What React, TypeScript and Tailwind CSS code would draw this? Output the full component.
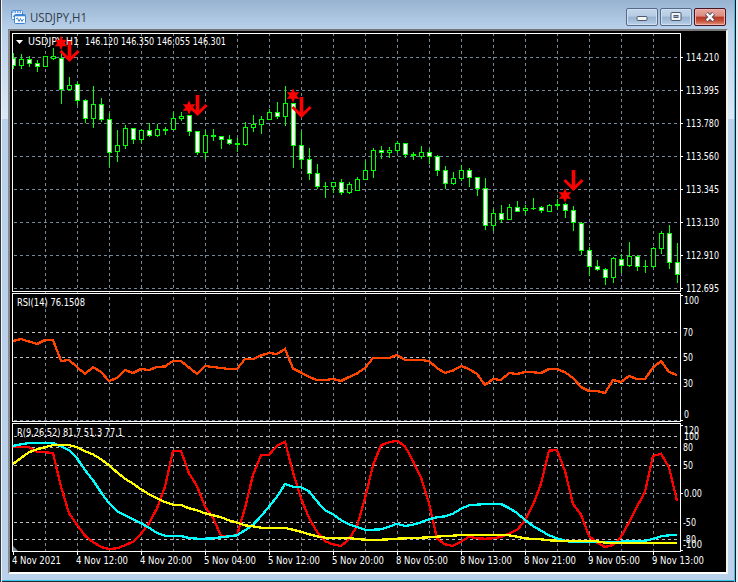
import React from "react";

// [high, bodyTop, bodyBottom, low, kind]; kind: 1 = bear (white), 0 = bull (hollow)
type Candle = [number, number, number, number, number];

const candles: Candle[] = [
  [53, 58, 65, 68, 1], [54, 59, 65, 68, 0], [56, 59, 63, 66, 1], [60, 63, 66, 71, 1],
  [56, 56, 66, 66, 0], [48, 56, 58, 59, 0], [50, 58, 89, 103, 1], [77, 85, 89, 90, 0],
  [82, 84, 100, 104, 1], [99, 100, 118, 122, 1], [86, 104, 118, 127, 0], [98, 104, 119, 121, 1],
  [113, 119, 152, 166, 1], [130, 145, 151, 161, 0], [125, 128, 145, 148, 0], [128, 128, 139, 143, 1],
  [129, 130, 139, 142, 0], [123, 130, 135, 136, 1], [124, 129, 135, 136, 0], [127, 129, 130, 134, 0],
  [112, 118, 129, 129, 0], [112, 116, 118, 120, 0], [115, 115, 131, 135, 1], [131, 131, 152, 154, 1],
  [130, 135, 152, 158, 0], [129, 135, 136, 140, 0], [136, 136, 139, 148, 1], [135, 139, 143, 144, 1],
  [138, 143, 144, 151, 0], [122, 127, 144, 145, 0], [115, 124, 127, 131, 0], [116, 119, 124, 133, 0],
  [109, 112, 119, 119, 0], [102, 112, 116, 118, 1], [86, 103, 116, 125, 0], [103, 103, 145, 167, 1],
  [131, 145, 159, 168, 1], [148, 159, 173, 179, 1], [164, 173, 186, 188, 1], [182, 186, 186, 197, 0],
  [182, 182, 186, 192, 0], [179, 182, 192, 194, 1], [182, 184, 192, 193, 0], [177, 179, 190, 190, 0],
  [161, 170, 179, 179, 0], [148, 150, 170, 177, 0], [146, 150, 152, 158, 1], [147, 150, 152, 157, 0],
  [141, 143, 150, 152, 0], [143, 143, 154, 157, 1], [152, 154, 155, 159, 0], [146, 152, 156, 158, 0],
  [149, 152, 156, 163, 1], [155, 156, 170, 175, 1], [166, 170, 183, 188, 1], [172, 178, 183, 184, 0],
  [165, 170, 178, 180, 0], [168, 170, 177, 186, 1], [177, 177, 188, 195, 1], [178, 188, 225, 229, 1],
  [209, 213, 225, 230, 0], [205, 213, 219, 222, 1], [204, 207, 219, 219, 0], [201, 207, 211, 211, 1],
  [205, 208, 210, 214, 0], [198, 208, 208, 209, 0], [206, 207, 210, 212, 1], [204, 205, 211, 211, 0],
  [199, 204, 205, 209, 0], [203, 204, 210, 217, 1], [206, 210, 222, 230, 1], [222, 223, 250, 254, 1],
  [247, 250, 266, 275, 1], [260, 266, 269, 270, 1], [268, 269, 277, 284, 1], [257, 258, 277, 282, 0],
  [254, 259, 265, 272, 1], [242, 256, 265, 266, 0], [255, 256, 266, 270, 1], [260, 266, 266, 272, 0],
  [247, 248, 266, 267, 0], [231, 233, 248, 253, 0], [225, 233, 262, 268, 1], [243, 262, 274, 282, 1],
];

const rsi = [
  341, 339, 341.5, 344, 340, 340, 361, 360, 367, 374, 367, 372, 381, 378, 370, 373, 369, 370, 367, 366.5,
  361, 361, 367.5, 374, 366, 367, 368, 369, 369, 359, 359, 355.5, 353, 354, 349, 368.5, 372.5, 377, 380, 380,
  379, 381, 377, 373.5, 368, 358, 358, 358, 355, 360, 360, 360, 361, 368, 373, 370.5, 366, 369, 374, 385,
  379, 380, 373, 374, 372, 372.3, 373, 369, 369, 372.3, 378, 387, 391, 391, 393, 380, 382, 376, 379, 379,
  367.5, 361, 372, 375,
];

const fast = [
  447, 447, 447, 452, 452.3, 453, 486.7, 513.3, 524.7, 535.7, 542, 547, 549, 548.3, 545.3, 541.7, 533.7, 523.3,
  508.3, 486.7, 451, 451, 473.3, 486, 506.7, 517.7, 536, 536.3, 535, 508, 475, 455, 454.7, 446, 441.7, 472.3,
  498.3, 518, 531.7, 541.3, 544.3, 546, 539.3, 526, 498.3, 465.3, 445.3, 442.3, 440.7, 446.3, 461, 477.3, 503.3,
  538.7, 544.3, 546, 541.7, 536.7, 538.3, 538.7, 538.3, 537, 533.7, 530, 520.3, 505, 483.7, 450.7, 450, 471, 504,
  514.7, 536, 542.7, 547, 545, 536.7, 522.3, 506.7, 491.7, 456, 453.7, 467.3, 501,
];

const mid = [
  446, 444.3, 443, 443, 443, 443, 446.3, 450.3, 458.3, 470, 480.3, 492.3, 503.3, 511, 515.3, 519.3, 523.3, 527.7,
  533, 535.7, 536, 536, 538, 538.7, 538.7, 538.3, 537.3, 536.3, 535.3, 530.3, 524.7, 516.3, 506.7, 496.7, 484,
  486.7, 487.3, 491.3, 501.3, 510.3, 514.3, 520, 524.3, 527, 529.7, 529.7, 529.3, 526.7, 523.7, 526, 524.7, 522.3,
  519.3, 517.3, 516.3, 513.7, 508.7, 505.3, 504.7, 504, 504, 504, 508, 513, 520, 526, 530.7, 535.3, 538.3, 540.7,
  542.3, 542.3, 542.3, 542.3, 542.3, 542.3, 541.7, 541, 541, 540.7, 539, 536.3, 535.3, 534.7,
];

const slow = [
  464, 458, 452.3, 449.3, 447.3, 445, 445, 445, 447.3, 451.3, 454.3, 459.3, 465.3, 472.3, 478.7, 483.7, 489.3,
  494.3, 498.3, 502, 504.7, 505, 508.3, 510.3, 513.3, 515.3, 517.3, 520.3, 522.7, 525.3, 526.3, 527.7, 528, 528,
  528, 529.7, 531.7, 534.3, 536.3, 537.7, 538, 538, 538, 539, 539.7, 539.7, 539.7, 539.3, 538.7, 538.3, 537.7,
  537.7, 537.3, 536.7, 536, 535.7, 535, 535, 535, 535, 535, 535, 535.3, 536.7, 538.3, 539, 539.3, 540.3, 540.7,
  540.7, 541, 541, 541, 541.3, 542.7, 543, 543, 543, 543, 543, 543, 543, 543, 543,
];

const signals = [
  { star: [61, 43], arrow: [69.5, 41] },
  { star: [189, 107.5], arrow: [197.5, 95] },
  { star: [293, 95.5], arrow: [301.5, 97] },
  { star: [565, 195.5], arrow: [573.5, 170] },
];

const times = [
  "4 Nov 2021", "4 Nov 12:00", "4 Nov 20:00", "5 Nov 04:00", "5 Nov 12:00", "5 Nov 20:00",
  "8 Nov 05:00", "8 Nov 13:00", "8 Nov 21:00", "9 Nov 05:00", "9 Nov 13:00",
];

const SLATE = "#778899";
const SILVER = "#c0c0c0";
const FONT = "font-['DejaVu_Sans_Condensed','DejaVu_Sans',sans-serif] text-[10.5px]";

const gridX = Array.from({ length: 20 }, (_, i) => 45 + i * 32);
const toPoints = (ys: number[]) => ys.map((y, i) => `${13 + i * 8},${y}`).join(" ");

function Label({ x, y, w, children }: { x: number; y: number; w: number; children: string }) {
  return (
    <text x={x} y={y} textLength={w} lengthAdjust="spacingAndGlyphs" fill="#fff" xmlSpace="preserve">
      {children}
    </text>
  );
}

function Series({ ys, color }: { ys: number[]; color: string }) {
  return <polyline points={toPoints(ys)} fill="none" stroke={color} strokeWidth={2.3} shapeRendering="crispEdges" />;
}

interface PanelProps {
  top: number;
  height: number;
  frameTop: number;
  frameBottom: number;
  lines: [number, string][];
  ticks: number[];
  children: React.ReactNode;
}

function Panel({ top, height, frameTop, frameBottom, lines, ticks, children }: PanelProps) {
  return (
    <svg
      className={`block shrink-0 overflow-visible ${FONT}`}
      width={716}
      height={height}
      viewBox={`10 ${top} 716 ${height}`}
    >
      <g shapeRendering="crispEdges">
        {gridX.map((x) => (
          <line key={x} x1={x + 0.5} x2={x + 0.5} y1={top} y2={frameBottom} stroke={SLATE} strokeDasharray="3 3" strokeDashoffset={(top - 33 + 600) % 6} />
        ))}
        {lines.map(([y, c]) => (
          <line key={y} x1={14} x2={680} y1={y + 0.5} y2={y + 0.5} stroke={c} strokeDasharray="3 3" />
        ))}
        <rect x={12.5} y={frameTop + 0.5} width={668} height={frameBottom - frameTop} fill="none" stroke="#fff" />
        {ticks.map((y) => (
          <rect key={y} x={681} y={y} width={2} height={1} fill="#fff" />
        ))}
      </g>
      {children}
    </svg>
  );
}

function CandleShape({ c, i }: { c: Candle; i: number }) {
  const [hi, t, b, lo, bear] = c;
  const x = 13 + i * 8;
  const left = i === 0 ? 13 : x - 2;
  const right = x + 3;
  return (
    <g>
      <rect x={x} y={hi} width={1} height={lo - hi + 1} fill="#0f0" />
      <rect x={left} y={t} width={right - left} height={b - t + 1} fill="#0f0" />
      {b - t > 1 && (
        <rect x={i === 0 ? 13 : left + 1} y={t + 1} width={i === 0 ? 2 : 3} height={b - t - 1} fill={bear ? "#fff" : "#000"} />
      )}
    </g>
  );
}

function Star({ x, y }: { x: number; y: number }) {
  const pts = Array.from({ length: 12 }, (_, k) => {
    const r = k % 2 ? 3.6 : 7.2;
    const a = (Math.PI / 6) * k - Math.PI / 2;
    return `${x + r * Math.cos(a)},${y + r * Math.sin(a)}`;
  }).join(" ");
  return <polygon points={pts} fill="#f00" />;
}

function Arrow({ x, y }: { x: number; y: number }) {
  return (
    <g fill="none" stroke="#f00" strokeWidth={3}>
      <path d={`M${x} ${y}V${y + 19}`} strokeWidth={3.6} />
      <path d={`M${x - 9} ${y + 10}L${x} ${y + 19}L${x + 9} ${y + 10}`} />
    </g>
  );
}

function WinButton({ close, children }: { close?: boolean; children: React.ReactNode }) {
  const tone = close
    ? "border-[#47142a] bg-[linear-gradient(#e9a79f_0,#dc8c80_45%,#b93420_50%,#c5513b_75%,#e0977d_100%)] shadow-[inset_0_0_0_1px_#eeb1a5]"
    : "border-[#566a8a] bg-[linear-gradient(#c4d7eb_0,#b6cce4_45%,#98b3d0_50%,#a5bfdb_75%,#bdd4eb_100%)] shadow-[inset_0_0_0_1px_#cfdff0]";
  return (
    <button className={`flex h-[18px] w-8 items-center justify-center rounded-[2px] border ${tone}`}>{children}</button>
  );
}

function TitleBar() {
  return (
    <header className="flex h-[29px] shrink-0 items-start bg-linear-to-b from-[#98b3d1] to-[#b9d1ea] pl-[9px] pr-2 pt-2">
      <svg width="15" height="15" viewBox="0 0 15 15" className="mt-[2px]">
        <rect x="0.5" y="0.5" width="11" height="9" rx="1" fill="#eef6ff" stroke="#4d8fdc" />
        <path d="M1 2h10" stroke="#4d8fdc" strokeWidth="1.5" strokeDasharray="1.5 1" />
        <path d="M2 7l1.5-2L5 7" fill="none" stroke="#4d8fdc" />
        <rect x="3.5" y="4.5" width="11" height="9" rx="1" fill="#fff" stroke="#3d84d6" />
        <path d="M3.5 5.500h11" stroke="#3d84d6" strokeWidth="1.6" />
        <path d="M5 9l1.500-1 1.500 3.500 1.500-3 1.500 3L12.500 9" fill="none" stroke="#3d84d6" />
      </svg>
      <svg width="70" height="20" className="ml-1 font-['Open_Sans','Noto_Sans',sans-serif] text-[12.5px]">
        <text x="0" y="14" textLength="57" lengthAdjust="spacingAndGlyphs" fill="#303b4b">USDJPY,H1</text>
      </svg>
      <div className="ml-auto flex gap-[2px]">
        <WinButton>
          <svg width="12" height="12" viewBox="0 0 12 12">
            <rect x="1" y="5.500" width="10" height="4" rx="1" fill="#f4f4f4" stroke="#4d5a6c" />
          </svg>
        </WinButton>
        <WinButton>
          <svg width="12" height="10" viewBox="0 0 12 10">
            <rect x="1" y="0.5" width="10" height="8" rx="1" fill="#f4f4f4" stroke="#4d5a6c" />
            <rect x="4" y="3.5" width="4" height="2" fill="#8fabd0" stroke="#4d5a6c" />
          </svg>
        </WinButton>
        <WinButton close>
          <svg width="12" height="10" viewBox="0 0 12 10">
            <path d="M2.500 1.500l7 7M9.500 1.500l-7 7" stroke="#4a4455" strokeWidth="4.200" />
            <path d="M2.700 1.700l6.600 6.600M9.300 1.700l-6.600 6.600" stroke="#f8f8f8" strokeWidth="2.400" />
          </svg>
        </WinButton>
      </div>
    </header>
  );
}

export default function App() {
  return (
    <div className="flex h-[582px] w-[738px] overflow-hidden bg-white">
      <div className="w-px bg-[#33363a]" />
      <div className="w-px bg-[#eef5fc]" />
      <div className="flex h-[582px] w-[732px] flex-col bg-[#b9d1ea]">
        <TitleBar />
        <div className="flex h-[545px] shrink-0">
          <div className="h-full w-[6px] shrink-0 bg-[linear-gradient(#b9d1ea_0,#dce8f5_90px,#b9d1ea_90px)]" />
          <main className="flex w-[720px] shrink-0 flex-col border-2 border-b-white border-l-[#8a8a8a] border-r-[#f4f3f0] border-t-[#777] bg-black">
            <Panel
              top={31}
              height={261}
              frameTop={33}
              frameBottom={291}
              lines={[57, 90, 123, 156, 189, 222, 255, 288].map((y) => [y, SLATE])}
              ticks={[57, 90, 123, 156, 189, 222, 255, 288]}
            >
              <path d="M16 40h7l-3.500 4z" fill="#fff" />
              <Label x={28} y={45} w={51}>USDJPY,H1</Label>
              <Label x={85} y={45} w={141}>146.120 146.350 146.055 146.301</Label>
              <g shapeRendering="crispEdges">
                {candles.map((c, i) => (
                  <CandleShape key={i} c={c} i={i} />
                ))}
              </g>
              {signals.map(({ star, arrow }, i) => (
                <g key={i}>
                  <Star x={star[0]} y={star[1]} />
                  <Arrow x={arrow[0]} y={arrow[1]} />
                </g>
              ))}
              {["114.210", "113.995", "113.780", "113.560", "113.345", "113.130", "112.910", "112.695"].map((v, i) => (
                <Label key={v} x={686} y={61 + i * 33} w={33}>{v}</Label>
              ))}
            </Panel>
            <Panel
              top={292}
              height={130}
              frameTop={293}
              frameBottom={421}
              lines={[[332, SILVER], [357, SILVER], [383, SILVER], [420, SLATE]]}
              ticks={[295, 420]}
            >
              <Label x={17} y={306} w={68}>RSI(14) 76.1508</Label>
              <Series ys={rsi} color="#ff4500" />
              <Label x={684} y={304} w={15}>100</Label>
              <Label x={683} y={336} w={10}>70</Label>
              <Label x={683} y={361} w={10}>50</Label>
              <Label x={683} y={387} w={10}>30</Label>
              <Label x={684} y={418} w={5}>0</Label>
            </Panel>
            <Panel
              top={422}
              height={130}
              frameTop={423}
              frameBottom={551}
              lines={[[436, SILVER], [447, SILVER], [465, SILVER], [493, SLATE], [522, SILVER], [539, SILVER]]}
              ticks={[425, 493, 550]}
            >
              <path d="M13 546v5h5z" fill={SLATE} />
              <Label x={17} y={436} w={106}>R(9,26,52) 81.7 51.3 77.1</Label>
              <Series ys={fast} color="#ff0000" />
              <Series ys={mid} color="#00ffff" />
              <Series ys={slow} color="#ffff00" />
              <Label x={684} y={434} w={15}>120</Label>
              <Label x={684} y={440} w={15}>100</Label>
              <Label x={683} y={451} w={10}>80</Label>
              <Label x={683} y={469} w={10}>50</Label>
              <Label x={684} y={497} w={18}>0.00</Label>
              <Label x={683} y={526} w={13}>-50</Label>
              <Label x={683} y={543} w={13}>-80</Label>
              <Label x={683} y={548} w={19}>-100</Label>
            </Panel>
            <div className="flex pl-[2px]">
              {times.map((t, i) => (
                <svg key={t} width="64" height="20" className={`block shrink-0 ${FONT}`}>
                  <rect x="1" y="0" width="1" height="3" fill="#fff" />
                  <text x="0" y="12" textLength={i ? 52 : 49} lengthAdjust="spacingAndGlyphs" fill="#fff">{t}</text>
                </svg>
              ))}
            </div>
          </main>
          <div className="h-full w-[6px] shrink-0 bg-[linear-gradient(#b9d1ea_0,#dce8f5_90px,#b9d1ea_90px)]" />
        </div>
        <div className="mt-[6px] h-px shrink-0 bg-[#35c5ea]" />
        <div className="h-px shrink-0 bg-[#26292d]" />
      </div>
      <div className="w-px bg-[#35c5ea]" />
      <div className="w-px bg-[#101418]" />
      <div className="w-[2px] bg-[#e8ecf0]" />
    </div>
  );
}
